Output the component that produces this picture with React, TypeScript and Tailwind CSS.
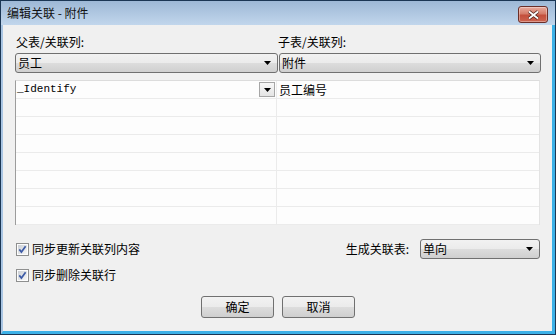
import React from "react";

const Arrow = () => (
  <svg width="7" height="4" viewBox="0 0 7 4" className="shrink-0">
    <polygon points="0,0 7,0 3.5,4" fill="#000" />
  </svg>
);

const Combo = ({ value, className }: { value: string; className?: string }) => (
  <div
    className={`flex h-[20px] items-center rounded-[3px] border border-[#707070] bg-[linear-gradient(#f2f2f2,#ebebeb_50%,#dddddd_50%,#cfcfcf)] pl-[2px] pr-[6px] ${className ?? ""}`}
  >
    <span className="flex-1 text-[12px] leading-[14px] text-black">{value}</span>
    <Arrow />
  </div>
);

const CheckBox = () => (
  <svg width="13" height="13" viewBox="0 0 13 13" className="shrink-0">
    <defs>
      <linearGradient id="cbfill" x1="0" y1="0" x2="1" y2="1">
        <stop offset="0" stopColor="#cbcfd5" />
        <stop offset="1" stopColor="#f7f7f7" />
      </linearGradient>
    </defs>
    <rect x="0.5" y="0.5" width="12" height="12" fill="#fdfdfd" stroke="#8e8f8f" />
    <rect x="2" y="2" width="9" height="9" fill="url(#cbfill)" />
    <path d="M3.3 6.4 L5.4 9 L9.6 3.3" fill="none" stroke="#3c5aa6" strokeWidth="1.7" />
  </svg>
);

const Button = ({ label }: { label: string }) => (
  <div className="flex h-[22px] w-[73px] items-center justify-center rounded-[3px] border border-[#707070] bg-[linear-gradient(#f2f2f2,#ebebeb_50%,#dddddd_50%,#cfcfcf)] text-[12px] leading-[14px] text-black">
    {label}
  </div>
);

const rows = [0, 1, 2, 3, 4, 5, 6, 7];

export default function App() {
  return (
    <div className="flex h-[335px] w-[556px] flex-col border border-[#1b3654] bg-[#bcd2ea] font-['Noto_Sans_CJK_SC',sans-serif] text-black">
      {/* title bar */}
      <div className="flex h-[24px] shrink-0 items-center justify-between bg-[linear-gradient(#9db8d6,#c1d6ec)] pl-[6px] pr-[7px]">
        <span className="text-[12px] leading-[14px] text-[#111]">编辑关联 - 附件</span>
        <div className="mt-[3px] flex h-[17px] w-[30px] items-center justify-center rounded-[3px] border border-[#6b2e28] bg-[linear-gradient(#e9ab9e,#d57c69_45%,#c44f3c_55%,#cc6450)] shadow-[inset_0_0_0_1px_rgba(255,255,255,0.35)]">
          <svg width="13" height="10" viewBox="0 0 13 10">
            <path d="M2 1.5 L11 8.5 M11 1.5 L2 8.5" stroke="#4a1f1a" strokeWidth="3.4" />
            <path d="M2 1.5 L11 8.5 M11 1.5 L2 8.5" stroke="#fff" strokeWidth="1.8" />
          </svg>
        </div>
      </div>

      {/* client */}
      <div className="flex flex-1 flex-col border-b-[3px] border-l-[2px] border-r-[3px] border-b-[#3db1e7] border-l-[#a9c5e3] border-r-[#3db1e7] bg-[#f0f0f0] pl-[12px] pr-[11px] pt-[10px]">
        <div className="flex text-[12px] leading-[14px]">
          <span className="w-[263px] pl-[1px]">父表/关联列:</span>
          <span>子表/关联列:</span>
        </div>

        <div className="mt-[4px] flex gap-[1px]">
          <Combo value="员工" className="w-[263px]" />
          <Combo value="附件" className="w-[262px]" />
        </div>

        {/* grid */}
        <div className="mt-[7px] w-[525px] border-b-0 border-l border-r border-t border-l-[#9c9c9c] border-r-[#e3e3e3] border-t-[#dcdcdc] bg-[#fdfdfd]">
          {rows.map((i) => (
            <div key={i} className="flex h-[18px] border-b border-[#ebebeb]">
              <div className="flex w-[261px] items-start border-r border-[#ebebeb] pl-[1px] pr-[1px]">
                {i === 0 && (
                  <>
                    <span className="flex-1 pt-[1px] font-['Liberation_Mono',monospace] text-[11px] leading-[15px]">
                      _Identify
                    </span>
                    <div className="mt-[1px] flex h-[15px] w-[16px] items-center justify-center border border-[#a6a6a6] bg-[linear-gradient(#f8f8f8,#e4e4e4)]">
                      <svg width="7" height="4" viewBox="0 0 7 4">
                        <polygon points="0,0 7,0 3.5,4" fill="#000" />
                      </svg>
                    </div>
                  </>
                )}
              </div>
              <div className="flex-1 pl-[2px] pt-[1px] text-[12px] leading-[15px]">
                {i === 0 ? "员工编号" : ""}
              </div>
            </div>
          ))}
        </div>

        {/* options */}
        <div className="mt-[14px] flex h-[20px] items-center">
          <div className="flex flex-1 items-center gap-[3px] pl-[1px]">
            <CheckBox />
            <span className="text-[12px] leading-[14px]">同步更新关联列内容</span>
          </div>
          <span className="mr-[11px] text-[12px] leading-[14px]">生成关联表:</span>
          <Combo value="单向" className="mr-[1px] w-[120px]" />
        </div>
        <div className="mt-[9px] flex h-[14px] items-center gap-[3px] pl-[1px]">
          <CheckBox />
          <span className="text-[12px] leading-[14px]">同步删除关联行</span>
        </div>

        <div className="mt-[14px] flex justify-center gap-[8px]">
          <Button label="确定" />
          <Button label="取消" />
        </div>
      </div>
    </div>
  );
}
